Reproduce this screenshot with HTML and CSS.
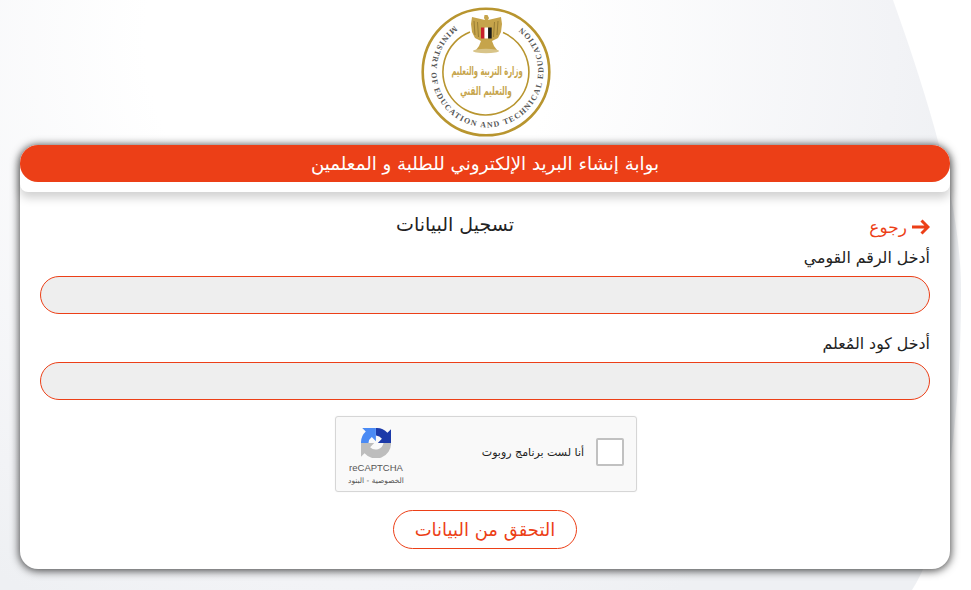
FILE: index.html
```html
<!DOCTYPE html>
<html lang="ar" dir="rtl">
<head>
<meta charset="utf-8">
<title>بوابة إنشاء البريد الإلكتروني</title>
<link rel="stylesheet" href="styles.css">
</head>
<body>
<svg class="backdrop" viewBox="0 0 971 590" aria-hidden="true">
  <defs>
    <radialGradient id="wash" gradientUnits="userSpaceOnUse" cx="350" cy="40" r="640">
      <stop offset=".32" stop-color="#fff"/>
      <stop offset=".85" stop-color="#f2f3f6"/>
      <stop offset="1" stop-color="#eef0f3"/>
    </radialGradient>
  </defs>
  <path d="M0 0H893C925 90 961 200 961 290C961 420 945 540 912 590H0Z" fill="url(#wash)"/>
</svg>
<header class="logo-wrap">
  <svg class="logo" viewBox="0 0 130 130" role="img" aria-label="Ministry of Education and Technical Education">
    <defs>
      <path id="ring" d="M33.500 19A56 56 0 1 0 100.500 20"/>
    </defs>
    <circle cx="65" cy="65" r="63.300" fill="#fff" stroke="#b8952f" stroke-width="2.600"/>
    <path d="M49 25A43 43 0 1 0 82 25.500" fill="none" stroke="#b8952f" stroke-width="1.600"/>
    <text class="logo-ring"><textPath href="#ring" textLength="279" lengthAdjust="spacing">MINISTRY OF EDUCATION AND TECHNICAL EDUCATION</textPath></text>
    <path d="M63.500 8h3l1.500 3-1 2 13-3 1 7-1 8-3 6-6 3 2 5 3 4H55l3-4 2-5-6-3-3-6-1-8 1-7 13 3-1-2z" fill="#c6a44b"/>
    <path d="M53 14l1 14M56.500 15l1 15M77 14l-1 14M73.500 15l-1 15" stroke="#8d7430" stroke-width=".8" fill="none"/>
    <rect x="60" y="20.500" width="3.600" height="11" fill="#c8202c"/>
    <rect x="63.500" y="20.500" width="3.600" height="11" fill="#fff"/>
    <rect x="67.100" y="20.500" width="3.600" height="11" fill="#1b1b1b"/>
    <ellipse cx="65" cy="44" rx="13" ry="2.200" fill="#d8c489"/>
    <text class="logo-cal" transform="translate(66 68) scale(.62 1.1)">وزارة التربية والتعليم</text>
    <text class="logo-cal" transform="translate(65 88) scale(.66 1.1)">والتعليم الفني</text>
  </svg>
</header>
<main class="card">
  <div class="card-head">
    <h1 class="card-title">بوابة إنشاء البريد الإلكتروني للطلبة و المعلمين</h1>
  </div>
  <form class="card-body">
    <div class="title-row">
      <a class="back" href="#">
        <svg class="back-icon" viewBox="0 0 18 16" aria-hidden="true"><path d="M0 8H16M9.500 1.500 16 8l-6.500 6.500" fill="none" stroke="#ec3f17" stroke-width="3"/></svg>
        <span>رجوع</span>
      </a>
      <h2 class="form-title">تسجيل البيانات</h2>
    </div>
    <label class="label label-first">أدخل الرقم القومي</label>
    <div class="input"></div>
    <label class="label">أدخل كود المُعلم</label>
    <div class="input"></div>
    <div class="captcha">
      <span class="check"></span>
      <span class="captcha-text">أنا لست برنامج روبوت</span>
      <div class="captcha-brand">
        <svg class="captcha-logo" viewBox="0 0 32 32" aria-hidden="true">
          <path d="M32 16A16 16 0 0 1 3.800 26.900L0 30.700V16.100H14.100L9.700 20.500A8.500 8.500 0 0 0 24 16Z" fill="#bdbdbd"/>
          <path d="M0 16A16 16 0 0 1 5.100 3.800L1.300 0H15.900V14.100L11.500 9.700A8.500 8.500 0 0 0 8 16Z" fill="#4a8af4"/>
          <path d="M16 0A16 16 0 0 1 28.200 5.100L32 1.300V15.900H17.900L22.300 11.500A8.500 8.500 0 0 0 16 8Z" fill="#1c3aa9"/>
        </svg>
        <span class="captcha-name" dir="ltr">reCAPTCHA</span>
        <span class="captcha-links">الخصوصية - البنود</span>
      </div>
    </div>
    <div class="submit-row"><button class="submit" type="button">التحقق من البيانات</button></div>
  </form>
</main>
</body>
</html>
```
FILE: styles.css
```css
* { box-sizing: border-box; }
html, body { margin: 0; height: 590px; overflow: hidden; }
body { font-family: "DejaVu Sans", "Noto Sans", sans-serif; background: #fff; position: relative; color: #222; }
.backdrop { position: absolute; inset: 0; width: 971px; height: 590px; }
.logo-wrap { position: relative; display: flex; justify-content: center; padding-top: 7px; height: 145px; }
.logo { width: 130px; height: 130px; overflow: visible; }
.logo-ring { direction: ltr; font: bold 8px "Liberation Serif", serif; fill: #555; }
.logo-cal { font: bold 11px "DejaVu Sans", sans-serif; fill: #c6a44b; text-anchor: middle; }
.card { position: relative; width: 930px; height: 424px; margin: 0 21px 0 20px; background: #fff; border-radius: 18px; box-shadow: 0 1px 8px 1px rgba(0,0,0,.7); }
.card-head { height: 47px; border-radius: 18px 18px 8px 8px; background: #fff; box-shadow: 0 6px 10px rgba(0,0,0,.18); }
.card-title { margin: 0; height: 37px; border-radius: 18px; background: #ec3f17; color: #fff; font-size: 18.200px; font-weight: 400; line-height: 38px; text-align: center; }
.card-body { padding: 20px 20px 0; }
.title-row { position: relative; height: 26px; padding-right: 60px; text-align: center; }
.form-title { margin: 0; font-size: 19px; font-weight: 400; line-height: 24px; color: #222; }
.back { position: absolute; top: 3px; right: 0; display: flex; align-items: center; gap: 5px; color: #ec3f17; font-size: 17px; line-height: 24px; text-decoration: none; }
.back-icon { width: 18px; height: 16px; }
.label { display: block; margin: 20px 0 9px; font-size: 15.800px; line-height: 19px; color: #222; }
.label-first { margin-top: 10px; }
.input { height: 38px; border: 1px solid #ec3f17; border-radius: 19px; background: #eee; }
.captcha { display: flex; align-items: flex-start; width: 302px; height: 76px; margin: 16px 293px 0 295px; padding: 0 12px 0 5px; border: 1px solid #d6d6d6; border-radius: 3px; background: #f9f9f9; box-shadow: 0 0 2px rgba(0,0,0,.06); }
.check { width: 28px; height: 28px; margin-top: 21px; border: 2px solid #c1c1c1; border-radius: 2px; background: #fff; flex: none; }
.captcha-text { margin: 28px 12px 0 0; font-size: 11px; line-height: 16px; color: #222; flex: 1; }
.captcha-brand { width: 70px; padding-top: 11px; display: flex; flex-direction: column; align-items: center; flex: none; }
.captcha-logo { width: 30px; height: 30px; }
.captcha-name { margin-top: 4px; font: 9.500px/12px "Liberation Sans", sans-serif; color: #555; }
.captcha-links { margin-top: 2px; font-size: 7.500px; line-height: 9px; color: #555; }
.submit-row { display: flex; justify-content: center; margin-top: 18px; }
.submit { width: 184px; height: 39px; border: 1px solid #ec3f17; border-radius: 20px; background: #fff; color: #ec3f17; font: 18px "DejaVu Sans", sans-serif; }
```
